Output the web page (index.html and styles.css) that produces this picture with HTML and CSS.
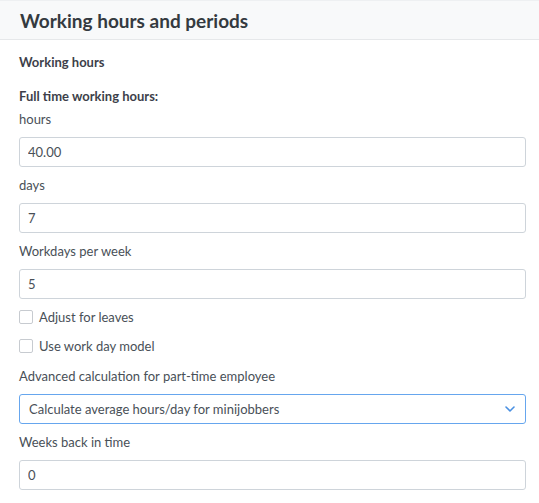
FILE: index.html
```html
<!DOCTYPE html>
<html lang="en">
<head>
    <meta charset="UTF-8">
    <title>Working hours and periods</title>
    <link rel="stylesheet" href="styles.css">
</head>
<body>
    <div class="panel">
        <div class="panel-heading">
            <h2>Working hours and periods</h2>
        </div>
        <div class="panel-body">
            <h4 class="section-title">Working hours</h4>
            <h5 class="sub-title">Full time working hours:</h5>

            <div class="field first">
                <label for="hours">hours</label>
                <input type="text" id="hours" value="40.00">
            </div>
            <div class="field">
                <label for="days">days</label>
                <input type="text" id="days" value="7">
            </div>
            <div class="field">
                <label for="workdays">Workdays per week</label>
                <input type="text" id="workdays" value="5">
            </div>

            <label class="check"><span class="box"></span>Adjust for leaves</label>
            <label class="check"><span class="box"></span>Use work day model</label>

            <div class="field after-check">
                <label for="calc">Advanced calculation for part-time employee</label>
                <div class="select focus" id="calc">
                    <span>Calculate average hours/day for minijobbers</span>
                    <svg width="10" height="6" viewBox="0 0 10 6"><path d="M1 1l4 4 4-4" fill="none" stroke="#4a90e2" stroke-width="1.6" stroke-linecap="round" stroke-linejoin="round"/></svg>
                </div>
            </div>
            <div class="field">
                <label for="weeks">Weeks back in time</label>
                <input type="text" id="weeks" value="0">
            </div>
        </div>
    </div>
</body>
</html>
```

FILE: styles.css
```css
:root {
    --text-color: #495057;
    --heading-color: #343a40;
    --border-color: #ced4da;
    --focus-color: #66a6ee;
}

body {
    margin: 0;
    font-family: Lato, "Open Sans", sans-serif;
    font-size: 13px;
    color: var(--text-color);
    background: #fff;
}

.panel-heading {
    height: 40px;
    box-sizing: border-box;
    padding: 0 20px;
    background-color: #f8f9fa;
    border-top: 1px solid #eef0f2;
    border-bottom: 1px solid #e6e8ea;
    display: flex;
    align-items: center;
}

.panel-heading h2 {
    margin: 0;
    font-size: 19px;
    font-weight: 700;
    color: var(--heading-color);
}

.panel-body {
    padding: 14px 13px 0 19px;
    display: flex;
    flex-direction: column;
}

.section-title,
.sub-title {
    margin: 0;
    font-size: 13px;
    font-weight: 700;
    line-height: 16px;
    color: #3d3f4a;
}

.sub-title {
    margin-top: 18px;
}

.field {
    display: flex;
    flex-direction: column;
}

.field label {
    line-height: 16px;
    margin: 10px 0 10px;
}

.field.first label {
    margin-top: 7px;
}

.field.after-check label {
    margin-top: 14px;
}

input,
.select {
    height: 30px;
    box-sizing: border-box;
    border: 1px solid var(--border-color);
    border-radius: 3px;
    padding: 0 8px;
    font: inherit;
    color: var(--text-color);
    background: #fff;
}

.select {
    display: flex;
    align-items: center;
    justify-content: space-between;
    padding: 0 10px 0 9px;
}

.select.focus {
    border-color: var(--focus-color);
}

.check {
    display: flex;
    align-items: center;
    gap: 6px;
    line-height: 16px;
    margin-top: 10px;
}

.check + .check {
    margin-top: 13px;
}

.box {
    width: 12px;
    height: 12px;
    border: 1px solid #c7cbd0;
    border-radius: 2px;
    background: #fff;
}
```
